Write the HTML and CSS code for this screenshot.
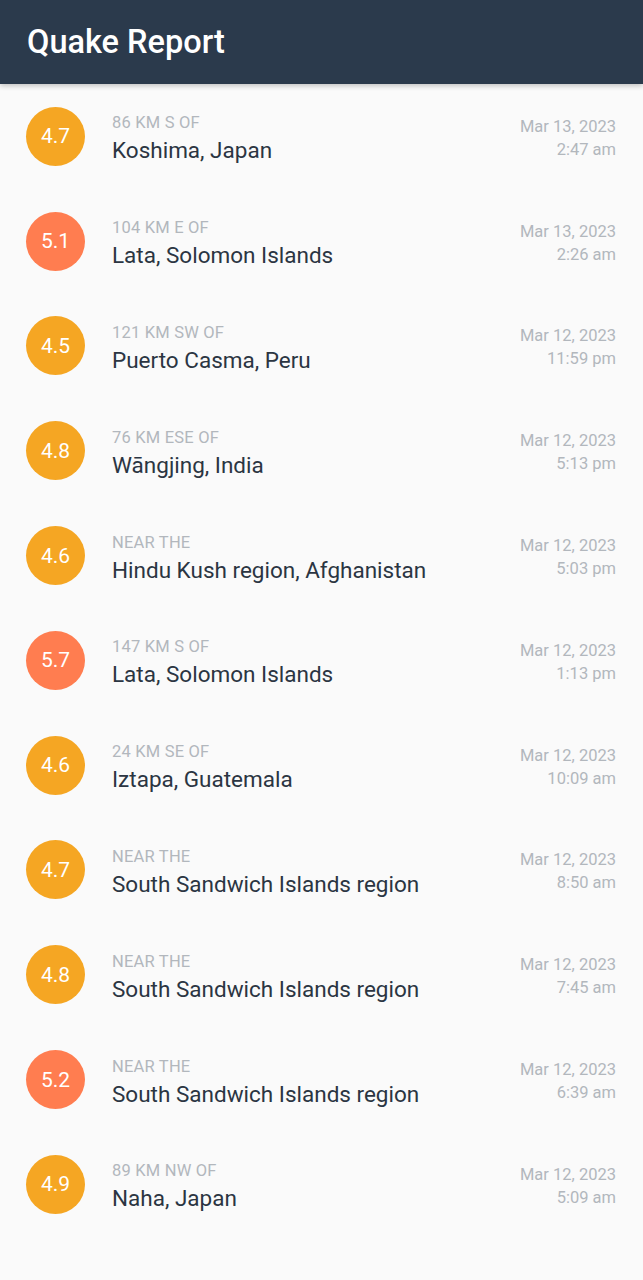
FILE: index.html
```html
<!DOCTYPE html>
<html lang="en">
<head>
<meta charset="utf-8">
<title>Quake Report</title>
<link rel="stylesheet" href="styles.css">
</head>
<body>
<header class="appbar"><h1 class="title">Quake Report</h1></header>
<main class="list">
  <div class="row"><div class="mag mag4">4.7</div><div class="loc"><div class="offset">86 km S of</div><div class="primary">Koshima, Japan</div></div><div class="when"><div>Mar 13, 2023</div><div>2:47 am</div></div></div>
  <div class="row"><div class="mag mag5">5.1</div><div class="loc"><div class="offset">104 km E of</div><div class="primary">Lata, Solomon Islands</div></div><div class="when"><div>Mar 13, 2023</div><div>2:26 am</div></div></div>
  <div class="row"><div class="mag mag4">4.5</div><div class="loc"><div class="offset">121 km SW of</div><div class="primary">Puerto Casma, Peru</div></div><div class="when"><div>Mar 12, 2023</div><div>11:59 pm</div></div></div>
  <div class="row"><div class="mag mag4">4.8</div><div class="loc"><div class="offset">76 km ESE of</div><div class="primary">Wāngjing, India</div></div><div class="when"><div>Mar 12, 2023</div><div>5:13 pm</div></div></div>
  <div class="row"><div class="mag mag4">4.6</div><div class="loc"><div class="offset">Near the</div><div class="primary">Hindu Kush region, Afghanistan</div></div><div class="when"><div>Mar 12, 2023</div><div>5:03 pm</div></div></div>
  <div class="row"><div class="mag mag5">5.7</div><div class="loc"><div class="offset">147 km S of</div><div class="primary">Lata, Solomon Islands</div></div><div class="when"><div>Mar 12, 2023</div><div>1:13 pm</div></div></div>
  <div class="row"><div class="mag mag4">4.6</div><div class="loc"><div class="offset">24 km SE of</div><div class="primary">Iztapa, Guatemala</div></div><div class="when"><div>Mar 12, 2023</div><div>10:09 am</div></div></div>
  <div class="row"><div class="mag mag4">4.7</div><div class="loc"><div class="offset">Near the</div><div class="primary">South Sandwich Islands region</div></div><div class="when"><div>Mar 12, 2023</div><div>8:50 am</div></div></div>
  <div class="row"><div class="mag mag4">4.8</div><div class="loc"><div class="offset">Near the</div><div class="primary">South Sandwich Islands region</div></div><div class="when"><div>Mar 12, 2023</div><div>7:45 am</div></div></div>
  <div class="row"><div class="mag mag5">5.2</div><div class="loc"><div class="offset">Near the</div><div class="primary">South Sandwich Islands region</div></div><div class="when"><div>Mar 12, 2023</div><div>6:39 am</div></div></div>
  <div class="row"><div class="mag mag4">4.9</div><div class="loc"><div class="offset">89 km NW of</div><div class="primary">Naha, Japan</div></div><div class="when"><div>Mar 12, 2023</div><div>5:09 am</div></div></div>
</main>
</body>
</html>
```

FILE: styles.css
```css
html, body {
  margin: 0;
  padding: 0;
  background: #fafafa;
  font-family: Roboto, "Liberation Sans", sans-serif;
}
.appbar {
  position: relative;
  height: 84px;
  background: #2b3a4c;
  display: flex;
  align-items: center;
  padding: 0 27px;
  box-shadow: 0 2px 5px rgba(0, 0, 0, 0.22);
  z-index: 1;
}
.title {
  margin: 0;
  color: #ffffff;
  font-size: 32.5px;
  font-weight: 500;
  line-height: 1;
}
.list {
  display: flex;
  flex-direction: column;
}
.row {
  height: 104.8px;
  display: flex;
  align-items: center;
  padding: 0 27px 0 26px;
  box-sizing: border-box;
}
.mag {
  width: 59px;
  height: 59px;
  border-radius: 50%;
  flex: none;
  display: flex;
  align-items: center;
  justify-content: center;
  color: #ffffff;
  font-size: 21px;
}
.mag4 { background: #f5a623; }
.mag5 { background: #ff7d50; }
.loc {
  flex: 1;
  margin: 8px 0 0 27px;
  display: flex;
  flex-direction: column;
}
.offset {
  color: #b2b7bd;
  font-size: 16.5px;
  letter-spacing: 0.2px;
  line-height: 20px;
  text-transform: uppercase;
}
.primary {
  color: #2b3542;
  font-size: 22.5px;
  line-height: 34px;
}
.when {
  margin-top: 3px;
  text-align: right;
  color: #b2b7bd;
  font-size: 16.5px;
  line-height: 23px;
}
```
